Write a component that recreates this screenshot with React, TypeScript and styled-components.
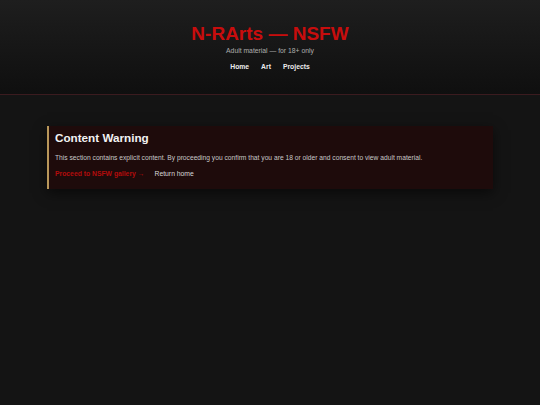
import styled, { createGlobalStyle } from 'styled-components'

const GlobalStyle = createGlobalStyle`
  html, body {
    margin: 0;
    padding: 0;
    background: #141414;
    font-family: "Liberation Sans", Arial, sans-serif;
    color: #ddd;
  }
  #root {
    min-height: 100vh;
  }
`

const Page = styled.div`
  min-height: 100vh;
  background: #141414;
`

const Header = styled.header`
  padding: 22px 0 23px;
  text-align: center;
  background: linear-gradient(180deg, #1e1e1e 0%, #0f0f0f 100%);
  border-bottom: 1px solid #3b1b1f;
`

const Title = styled.h1`
  margin: 0 0 2px;
  font-size: 19px;
  line-height: 23px;
  font-weight: 700;
  color: #c80d0d;
`

const Subtitle = styled.p`
  margin: 0 0 8px;
  font-size: 6.8px;
  line-height: 8px;
  color: #adadad;
`

const Nav = styled.nav`
  display: flex;
  justify-content: center;
  gap: 12px;
`

const NavLink = styled.a`
  font-size: 6.8px;
  line-height: 8px;
  font-weight: 700;
  color: #ececec;
  text-decoration: none;
`

const Main = styled.main`
  padding: 31px 47px;
`

const WarningCard = styled.section`
  padding: 5px 6px 11px;
  background: #1e0b0b;
  border-left: 2px solid #b8975a;
  box-shadow: 0 4px 12px rgba(0, 0, 0, 0.55);
`

const CardTitle = styled.h2`
  margin: 0 0 9px;
  font-size: 11.7px;
  line-height: 14px;
  font-weight: 700;
  color: #f2f2f2;
`

const CardText = styled.p`
  margin: 0 0 8px;
  font-size: 6.7px;
  line-height: 8px;
  color: #c8c8c8;
`

const Actions = styled.div`
  display: flex;
  gap: 10px;
`

const ActionLink = styled.a<{ $primary?: boolean }>`
  font-size: 6.8px;
  line-height: 8px;
  font-weight: ${({ $primary }) => ($primary ? 700 : 400)};
  color: ${({ $primary }) => ($primary ? '#b30c0c' : '#d8d8d8')};
  text-decoration: none;
`

const App: React.FC = () => {
  return (
    <Page>
      <GlobalStyle />
      <Header>
        <Title>N-RArts — NSFW</Title>
        <Subtitle>Adult material — for 18+ only</Subtitle>
        <Nav>
          <NavLink href="#">Home</NavLink>
          <NavLink href="#">Art</NavLink>
          <NavLink href="#">Projects</NavLink>
        </Nav>
      </Header>
      <Main>
        <WarningCard>
          <CardTitle>Content Warning</CardTitle>
          <CardText>
            This section contains explicit content. By proceeding you confirm that you are 18 or
            older and consent to view adult material.
          </CardText>
          <Actions>
            <ActionLink $primary href="#">
              Proceed to NSFW gallery →
            </ActionLink>
            <ActionLink href="#">Return home</ActionLink>
          </Actions>
        </WarningCard>
      </Main>
    </Page>
  )
}

export default App
